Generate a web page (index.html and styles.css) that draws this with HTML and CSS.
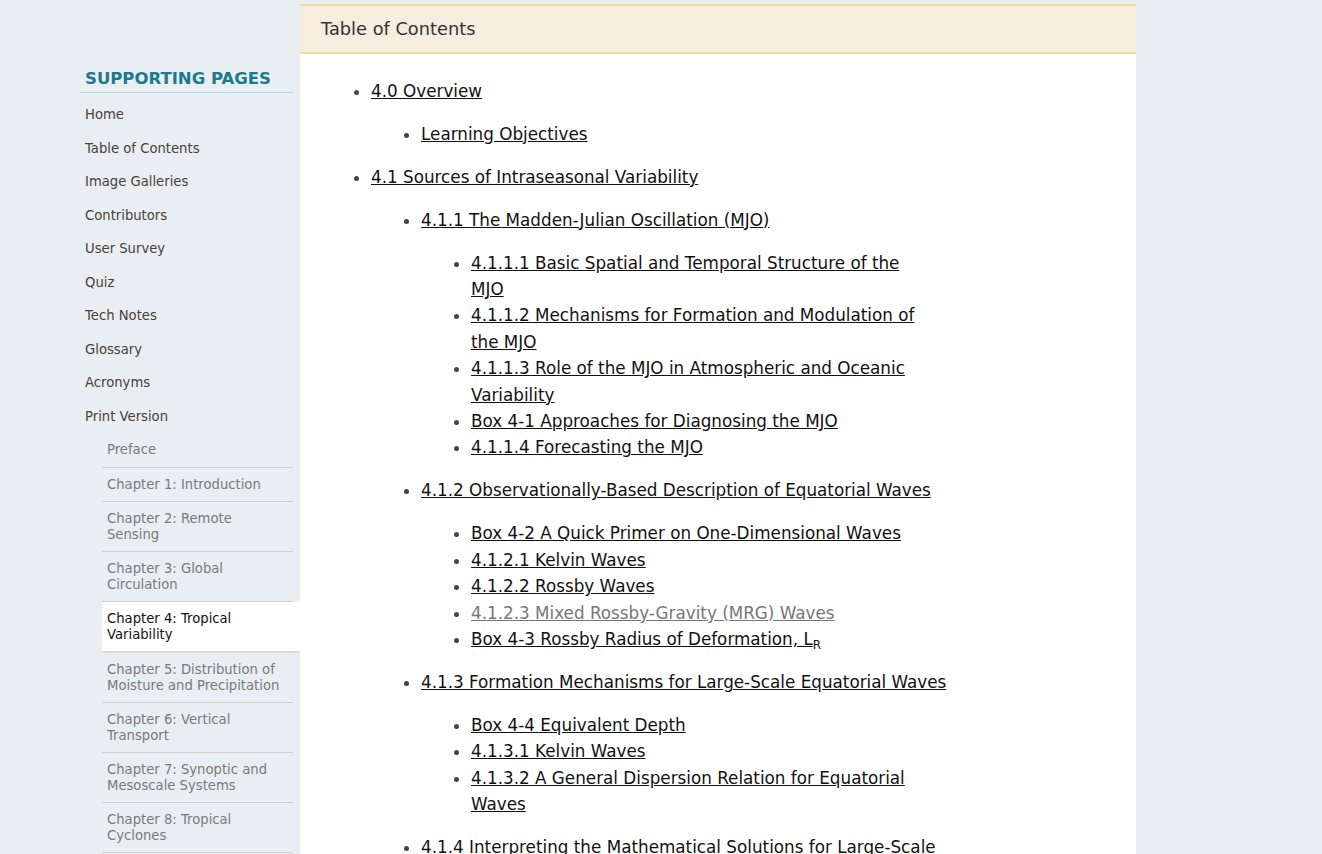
FILE: index.html
```html
<!DOCTYPE html>
<html lang="en">
<head>
<meta charset="utf-8">
<title>Table of Contents</title>
<link rel="stylesheet" href="styles.css">
</head>
<body>
<div class="page">
  <aside class="sidebar">
    <h2 class="side-title">SUPPORTING PAGES</h2>
    <ul class="side-nav">
      <li><a href="#">Home</a></li>
      <li><a href="#">Table of Contents</a></li>
      <li><a href="#">Image Galleries</a></li>
      <li><a href="#">Contributors</a></li>
      <li><a href="#">User Survey</a></li>
      <li><a href="#">Quiz</a></li>
      <li><a href="#">Tech Notes</a></li>
      <li><a href="#">Glossary</a></li>
      <li><a href="#">Acronyms</a></li>
      <li><a href="#">Print Version</a>
        <ul class="side-sub">
          <li><a href="#">Preface</a></li>
          <li><a href="#">Chapter 1: Introduction</a></li>
          <li><a href="#">Chapter 2: Remote Sensing</a></li>
          <li><a href="#">Chapter 3: Global Circulation</a></li>
          <li class="active"><a href="#">Chapter 4: Tropical Variability</a></li>
          <li><a href="#">Chapter 5: Distribution of Moisture and Precipitation</a></li>
          <li><a href="#">Chapter 6: Vertical Transport</a></li>
          <li><a href="#">Chapter 7: Synoptic and Mesoscale Systems</a></li>
          <li><a href="#">Chapter 8: Tropical Cyclones</a></li>
          <li><a href="#">Chapter 9: Climate Variability and Change</a></li>
        </ul>
      </li>
    </ul>
  </aside>
  <main class="main">
    <div class="main-head">Table of Contents</div>
    <div class="main-body">
      <ul class="toc">
        <li><a href="#">4.0 Overview</a>
          <ul><li><a href="#">Learning Objectives</a></li></ul>
        </li>
        <li><a href="#">4.1 Sources of Intraseasonal Variability</a>
          <ul>
            <li><a href="#">4.1.1 The Madden-Julian Oscillation (MJO)</a>
              <ul>
                <li><a href="#">4.1.1.1 Basic Spatial and Temporal Structure of the<br>MJO</a></li>
                <li><a href="#">4.1.1.2 Mechanisms for Formation and Modulation of the MJO</a></li>
                <li><a href="#">4.1.1.3 Role of the MJO in Atmospheric and Oceanic Variability</a></li>
                <li><a href="#">Box 4-1 Approaches for Diagnosing the MJO</a></li>
                <li><a href="#">4.1.1.4 Forecasting the MJO</a></li>
              </ul>
            </li>
            <li><a href="#">4.1.2 Observationally-Based Description of Equatorial Waves</a>
              <ul>
                <li><a href="#">Box 4-2 A Quick Primer on One-Dimensional Waves</a></li>
                <li><a href="#">4.1.2.1 Kelvin Waves</a></li>
                <li><a href="#">4.1.2.2 Rossby Waves</a></li>
                <li><a href="#" class="visited">4.1.2.3 Mixed Rossby-Gravity (MRG) Waves</a></li>
                <li><a href="#">Box 4-3 Rossby Radius of Deformation, L<sub>R</sub></a></li>
              </ul>
            </li>
            <li><a href="#" class="nowrap">4.1.3 Formation Mechanisms for Large-Scale Equatorial Waves</a>
              <ul>
                <li><a href="#">Box 4-4 Equivalent Depth</a></li>
                <li><a href="#">4.1.3.1 Kelvin Waves</a></li>
                <li><a href="#">4.1.3.2 A General Dispersion Relation for Equatorial Waves</a></li>
              </ul>
            </li>
            <li><a href="#">4.1.4 Interpreting the Mathematical Solutions for Large-Scale Equatorial Waves</a></li>
          </ul>
        </li>
      </ul>
    </div>
  </main>
  <div class="right-gutter"></div>
</div>
</body>
</html>
```
FILE: styles.css
```css
html, body {
  margin: 0;
  padding: 0;
}
body {
  background: #e9eef2;
  font-family: "DejaVu Sans", Verdana, sans-serif;
  color: #333;
  overflow: hidden;
}
.page {
  width: 1162px;
  margin: 0 auto;
  padding-top: 4px;
  display: flex;
  align-items: flex-start;
}
.sidebar {
  width: 220px;
  flex: none;
  box-sizing: border-box;
  padding: 65px 7px 0 0;
}
.side-title {
  margin: 0;
  padding: 0 5px 3px;
  font-size: 16.5px;
  font-weight: bold;
  color: #1b7a8e;
  line-height: 20px;
  border-bottom: 1px solid #acd8e6;
}
.side-nav {
  list-style: none;
  margin: 5px 0 0;
  padding: 0;
}
.side-nav a {
  display: block;
  padding: 9px 5px;
  font-size: 13.2px;
  line-height: 15.5px;
  color: #4a4137;
  text-decoration: none;
}
.side-sub {
  list-style: none;
  margin: 0 0 0 22px;
  padding: 0;
}
.side-sub li {
  border-bottom: 1px solid #cfcfcf;
}
.side-sub a {
  color: #7a7a7a;
}
.side-sub li.active {
  background: #fff;
  margin-right: -7px;
  border-bottom: 2px solid #dcdcdc;
}
.side-sub li.active a {
  color: #111;
}
.main {
  width: 836px;
  flex: none;
  background: #fff;
  min-height: 900px;
}
.main-head {
  background: #f6eddf;
  border-top: 2px solid #ecdca0;
  border-bottom: 2px solid #ecdca0;
  height: 46px;
  line-height: 46px;
  padding-left: 21px;
  font-size: 17.8px;
  color: #333;
}
.main-body {
  padding: 7px 0 0 31px;
  width: 611px;
}
.toc, .toc ul {
  margin: 16.6px 0;
  padding-left: 40px;
  list-style: disc;
}
.toc ul {
  padding-left: 50px;
}
.toc li {
  font-size: 16.8px;
  line-height: 26.4px;
  color: #444;
}
.toc a {
  color: #111;
  text-decoration: underline;
}
.toc a.visited {
  color: #777;
}
.toc a.nowrap {
  white-space: nowrap;
}
.toc sub {
  font-size: 12px;
  line-height: 0;
}
.right-gutter {
  width: 106px;
  flex: none;
}
```
